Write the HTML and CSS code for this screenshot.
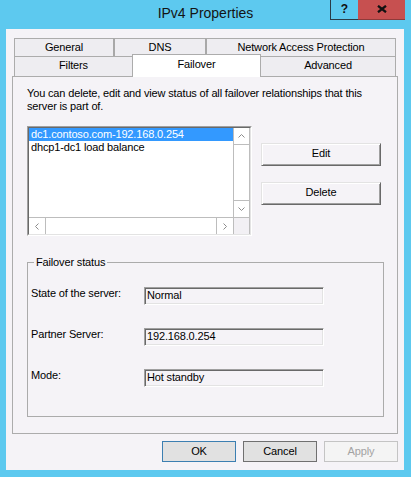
FILE: index.html
```html
<!DOCTYPE html>
<html>
<head>
<meta charset="utf-8">
<title>IPv4 Properties</title>
<link rel="stylesheet" href="styles.css">
</head>
<body>
<div class="window">
  <div class="titlebar">
    <div class="title-spacer"></div>
    <div class="title">IPv4 Properties</div>
    <div class="caption-buttons">
      <div class="cap help">?</div>
      <div class="cap close">
        <svg width="10" height="8" viewBox="0 0 10 8"><path d="M1 0.8 L9 7.2 M9 0.8 L1 7.2" stroke="#111" stroke-width="2.3" fill="none"/></svg>
      </div>
    </div>
  </div>
  <div class="client">
    <div class="tabs">
      <div class="tabrow row1">
        <div class="tab t-general">General</div>
        <div class="tab t-dns">DNS</div>
        <div class="tab t-nap">Network Access Protection</div>
      </div>
      <div class="tabrow row2">
        <div class="tab t-filters">Filters</div>
        <div class="tab t-failover">Failover</div>
        <div class="tab t-advanced">Advanced</div>
      </div>
    </div>
    <div class="panel">
      <p class="desc">You can delete, edit and view status of all failover relationships that this server is part of.</p>
      <div class="list-area">
        <div class="listbox">
          <div class="lb-inner">
            <div class="list-main">
              <div class="items">
                <div class="item sel">dc1.contoso.com-192.168.0.254</div>
                <div class="item">dhcp1-dc1 load balance</div>
              </div>
              <div class="vscroll">
                <div class="sbtn sbtn-up"><svg width="7" height="4" viewBox="0 0 7 4"><polyline points="0.5,3.5 3.5,0.5 6.5,3.5" fill="none" stroke="#8c8c8c"/></svg></div>
                <div class="vtrack"></div>
                <div class="sbtn sbtn-down"><svg width="7" height="4" viewBox="0 0 7 4"><polyline points="0.5,0.5 3.5,3.5 6.5,0.5" fill="none" stroke="#8c8c8c"/></svg></div>
              </div>
            </div>
            <div class="list-bottom">
              <div class="hscroll">
                <div class="sbtn sbtn-left"><svg width="4" height="7" viewBox="0 0 4 7"><polyline points="3.5,0.5 0.5,3.5 3.5,6.5" fill="none" stroke="#8c8c8c"/></svg></div>
                <div class="htrack"></div>
                <div class="sbtn sbtn-right"><svg width="4" height="7" viewBox="0 0 4 7"><polyline points="0.5,0.5 3.5,3.5 0.5,6.5" fill="none" stroke="#8c8c8c"/></svg></div>
              </div>
              <div class="corner"></div>
            </div>
          </div>
        </div>
        <div class="side-buttons">
          <div class="btn3d">Edit</div>
          <div class="btn3d">Delete</div>
        </div>
      </div>
      <fieldset class="group">
        <legend class="group-title">Failover status</legend>
        <div class="field-row">
          <span class="label">State of the server:</span>
          <div class="field">Normal</div>
        </div>
        <div class="field-row">
          <span class="label">Partner Server:</span>
          <div class="field">192.168.0.254</div>
        </div>
        <div class="field-row">
          <span class="label">Mode:</span>
          <div class="field">Hot standby</div>
        </div>
      </fieldset>
    </div>
    <div class="dialog-buttons">
      <div class="btn btn-ok">OK</div>
      <div class="btn btn-cancel">Cancel</div>
      <div class="btn btn-apply">Apply</div>
    </div>
  </div>
</div>
</body>
</html>
```
FILE: styles.css
```css
html, body {
  margin: 0;
  padding: 0;
  background: #5DC9EF;
}

body {
  font-family: "Liberation Sans", Arial, sans-serif;
  color: #000;
}

.window {
  width: 411px;
  height: 477px;
  background: #5DC9EF;
}

/* ---------- title bar ---------- */
.titlebar {
  height: 29px;
  display: grid;
  grid-template-columns: 1fr auto 1fr;
}

.title {
  font-size: 14px;
  line-height: 16px;
  padding-top: 5px;
  color: #141414;
}

.caption-buttons {
  justify-self: end;
  align-self: start;
  display: flex;
  margin-right: 6px;
}

.cap {
  box-sizing: border-box;
  height: 20px;
}

.help {
  width: 28px;
  border: 1px solid #2A3B47;
  border-top: none;
  border-right: none;
  font-weight: bold;
  font-size: 12px;
  line-height: 12px;
  padding-top: 3px;
  text-align: center;
  color: #111;
}

.close {
  width: 47px;
  background: #C75050;
  border-bottom: 1px solid #8E3A3A;
  display: flex;
  align-items: center;
  justify-content: center;
  padding-bottom: 1px;
}

/* ---------- client ---------- */
.client {
  margin-left: 6px;
  width: 398px;
  height: 441px;
  box-sizing: border-box;
  padding-top: 9px;
  background: #F5F3F7;
  font-size: 11px;
  letter-spacing: -0.15px;
}

/* ---------- tabs ---------- */
.tabs {
  margin-left: 8px;
  width: 382px;
}

.tabrow {
  display: flex;
}

.row1 {
  height: 18px;
}

.row2 {
  height: 20px;
}

.tab {
  box-sizing: border-box;
  background: #EEEDF1;
  border-top: 1px solid #ACACAC;
  border-left: 1px solid #ACACAC;
  text-align: center;
  line-height: 17px;
  white-space: nowrap;
}

.t-general { width: 99px; }
.t-dns { width: 92px; border-left: 2px solid #A8A8A8; }
.t-nap { width: 191px; border-left: 2px solid #A8A8A8; border-right: 1px solid #ACACAC; }

.t-filters { width: 118px; height: 20px; }
.t-failover {
  width: 129px;
  height: 23px;
  margin-top: -2px;
  background: #FFFFFF;
  border-right: 1px solid #ACACAC;
  line-height: 19px;
  position: relative;
  z-index: 2;
}
.t-advanced {
  width: 135px;
  height: 20px;
  border-left: none;
  border-right: 1px solid #ACACAC;
}

/* ---------- panel ---------- */
.panel {
  margin-left: 6px;
  width: 386px;
  height: 358px;
  box-sizing: border-box;
  border: 1px solid #ACACAC;
  padding: 10px 0 0 14px;
  background: #F5F3F7;
}

.desc {
  margin: 0;
  width: 345px;
  line-height: 13px;
}

.list-area {
  display: flex;
  margin-top: 13px;
}

.listbox {
  width: 225px;
  height: 110px;
  box-sizing: border-box;
  border: 1px solid;
  border-color: #A0A0A0 #FFFFFF #FFFFFF #A0A0A0;
}

.lb-inner {
  height: 100%;
  box-sizing: border-box;
  border: 1px solid;
  border-color: #696969 #E3E3E3 #E3E3E3 #696969;
  background: #FFFFFF;
  display: flex;
  flex-direction: column;
}

.list-main {
  display: flex;
  height: 89px;
}

.items {
  width: 204px;
}

.item {
  height: 13px;
  line-height: 13px;
  padding-left: 2px;
  white-space: nowrap;
}

.item.sel {
  background: #3399FF;
  color: #FFFFFF;
}

.vscroll {
  width: 17px;
  box-sizing: border-box;
  border-left: 1px solid #BDBDBD;
  border-right: 1px solid #BDBDBD;
  display: flex;
  flex-direction: column;
  background: #FFFFFF;
}

.sbtn {
  display: flex;
  align-items: center;
  justify-content: center;
  box-sizing: border-box;
}

.sbtn-up {
  height: 17px;
  border-bottom: 1px solid #BDBDBD;
}

.sbtn-down {
  height: 17px;
  border-top: 1px solid #BDBDBD;
}

.vtrack {
  flex: 1;
}

.list-bottom {
  display: flex;
  height: 17px;
}

.hscroll {
  width: 204px;
  box-sizing: border-box;
  border-top: 1px solid #BDBDBD;
  display: flex;
}

.sbtn-left {
  width: 17px;
  border-right: 1px solid #BDBDBD;
}

.sbtn-right {
  width: 17px;
  border-left: 1px solid #BDBDBD;
}

.htrack {
  flex: 1;
}

.corner {
  width: 17px;
  box-sizing: border-box;
  border-left: 1px solid #BDBDBD;
  border-right: 1px solid #BDBDBD;
  border-top: 1px solid #BDBDBD;
  background: #F2F0F4;
}

.side-buttons {
  margin-left: 9px;
  padding-top: 17px;
  display: flex;
  flex-direction: column;
  gap: 16px;
}

.btn3d {
  width: 120px;
  height: 23px;
  box-sizing: border-box;
  border: 1px solid;
  border-color: #E3E3E3 #696969 #696969 #E3E3E3;
  box-shadow: inset 1px 1px 0 #FFFFFF, inset -1px -1px 0 #A0A0A0;
  text-align: center;
  line-height: 19px;
}

/* ---------- group box ---------- */
.group {
  margin: 20px 0 0 0;
  padding: 0 0 29px 3px;
  width: 357px;
  box-sizing: border-box;
  min-width: 0;
  border: 1px solid #ABABAB;
}

.group-title {
  margin-left: 3px;
  padding: 0 2px;
  line-height: 13px;
}

.field-row {
  display: flex;
  align-items: flex-start;
  height: 18px;
  margin-top: 23px;
}

.field-row:first-of-type {
  margin-top: 18px;
}

.label {
  width: 113px;
  line-height: 13px;
  white-space: nowrap;
}

.field {
  width: 180px;
  height: 18px;
  box-sizing: border-box;
  border: 1px solid;
  border-color: #A0A0A0 #FFFFFF #FFFFFF #A0A0A0;
  box-shadow: inset 1px 1px 0 #696969, inset -1px -1px 0 #E3E3E3;
  padding: 1px 1px 1px 2px;
  line-height: 13px;
  white-space: nowrap;
}

/* ---------- dialog buttons ---------- */
.dialog-buttons {
  display: flex;
  justify-content: flex-end;
  gap: 7px;
  margin-top: 7px;
  padding-right: 6px;
}

.btn {
  width: 74px;
  height: 21px;
  box-sizing: border-box;
  border: 1px solid #707070;
  background: #E1E1E1;
  text-align: center;
  line-height: 19px;
}

.btn-ok {
  border-color: #3C7FB1;
}

.btn-apply {
  border-color: #C4C4C4;
  background: #F4F4F4;
  color: #A3A3A3;
}
```
